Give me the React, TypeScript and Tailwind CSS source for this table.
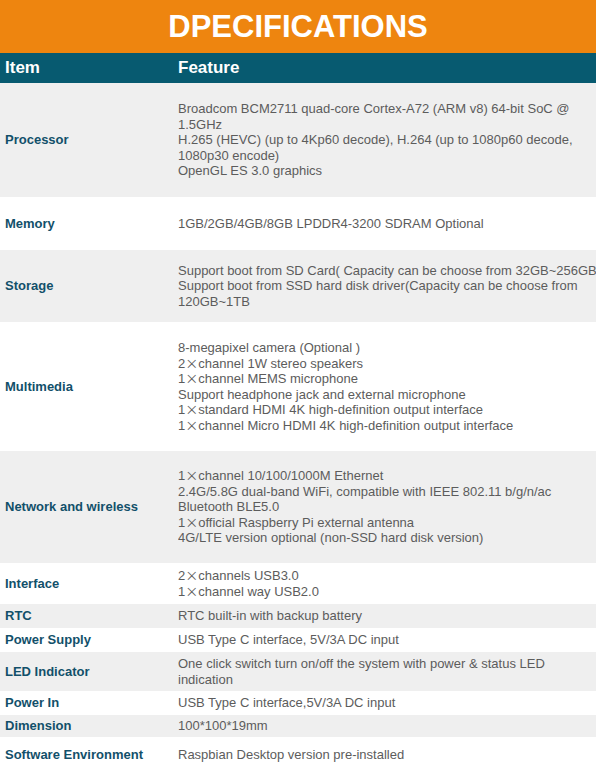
import React from 'react';

const X = () => <span className="font-['Noto_Sans_CJK_SC',sans-serif] leading-none">×</span>;

const App = () => {
  const rows: { label: string; h: string; lines: React.ReactNode[]; gray?: boolean }[] = [{
    label: 'Processor',
    h: 'h-[114px]',
    gray: true,
    lines: ['Broadcom BCM2711 quad-core Cortex-A72 (ARM v8) 64-bit SoC @', '1.5GHz', 'H.265 (HEVC) (up to 4Kp60 decode), H.264 (up to 1080p60 decode,', '1080p30 encode)', 'OpenGL ES 3.0 graphics']
  }, {
    label: 'Memory',
    h: 'h-[53px]',
    lines: ['1GB/2GB/4GB/8GB LPDDR4-3200 SDRAM Optional']
  }, {
    label: 'Storage',
    h: 'h-[72px]',
    gray: true,
    lines: ['Support boot from SD Card( Capacity can be choose from 32GB~256GB)', 'Support boot from SSD hard disk driver(Capacity can be choose from', '120GB~1TB']
  }, {
    label: 'Multimedia',
    h: 'h-[129px]',
    lines: ['8-megapixel camera (Optional )', <>2<X />channel 1W stereo speakers</>, <>1<X />channel MEMS microphone</>, 'Support headphone jack and external microphone', <>1<X />standard HDMI 4K high-definition output interface</>, <>1<X />channel Micro HDMI 4K high-definition output interface</>]
  }, {
    label: 'Network and wireless',
    h: 'h-[112px]',
    gray: true,
    lines: [<>1<X />channel 10/100/1000M Ethernet</>, '2.4G/5.8G dual-band WiFi, compatible with IEEE 802.11 b/g/n/ac', 'Bluetooth BLE5.0', <>1<X />official Raspberry Pi external antenna</>, '4G/LTE version optional (non-SSD hard disk version)']
  }, {
    label: 'Interface',
    h: 'h-[41px]',
    lines: [<>2<X />channels USB3.0</>, <>1<X />channel way USB2.0</>]
  }, {
    label: 'RTC',
    h: 'h-[24px]',
    gray: true,
    lines: ['RTC built-in with backup battery']
  }, {
    label: 'Power Supply',
    h: 'h-[24px]',
    lines: ['USB Type C interface, 5V/3A DC input']
  }, {
    label: 'LED Indicator',
    h: 'h-[39px]',
    gray: true,
    lines: ['One click switch turn on/off the system with power & status LED', 'indication']
  }, {
    label: 'Power In',
    h: 'h-[24px]',
    lines: ['USB Type C interface,5V/3A DC input']
  }, {
    label: 'Dimension',
    h: 'h-[22px]',
    gray: true,
    lines: ['100*100*19mm']
  }, {
    label: 'Software Environment',
    h: 'h-[36px]',
    lines: ['Raspbian Desktop version pre-installed']
  }];

  return <div className="w-[596px] h-[780px] overflow-hidden bg-white font-['Liberation_Sans',Arial,sans-serif]">
      <div className="h-[53px] pb-[1px] bg-[#ee850f] flex items-center justify-center">
        <h1 className="text-[31px] font-bold text-white leading-none">DPECIFICATIONS</h1>
      </div>
      <div className="h-[30px] bg-[#075a70] flex items-center text-white font-bold text-[17px]">
        <div className="w-[178px] pl-[5px]">Item</div>
        <div>Feature</div>
      </div>
      {rows.map((row, index) => <div key={index} className={`${row.h} flex items-center ${row.gray ? 'bg-[#efefef]' : 'bg-white'}`}>
          <div className="w-[178px] shrink-0 pl-[5px] text-[13px] font-bold text-[#12506a]">{row.label}</div>
          <div className="flex-1 overflow-hidden text-[13px] leading-[15.5px] text-[#5c5c5c]">
            {row.lines.map((line, i) => <div key={i} className="whitespace-nowrap">{line}</div>)}
          </div>
        </div>)}
    </div>;
};

export default App;
